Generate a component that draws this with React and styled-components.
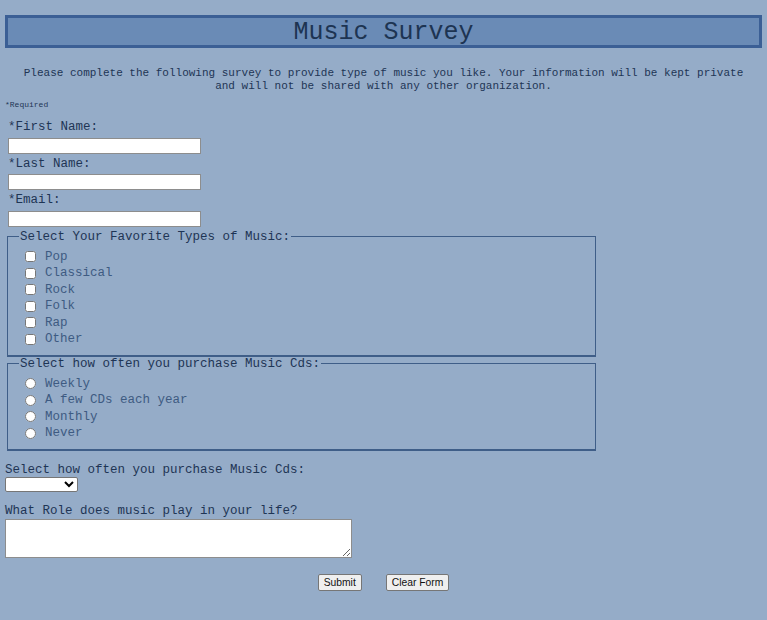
import React from "react";
import styled, { createGlobalStyle } from "styled-components";

const GlobalStyle = createGlobalStyle`
  html, body {
    margin: 0;
    background: #95acc8;
  }
  body {
    font-family: "Liberation Mono", "Courier New", monospace;
    color: #1e3555;
  }
`;

const Page = styled.div`
  padding: 15px 5px 30px;
  box-sizing: border-box;
  min-height: 620px;
`;

const Header = styled.h1`
  margin: 0;
  height: 33px;
  box-sizing: border-box;
  border: 3px solid #3b5f95;
  background: #6a8bb6;
  text-align: center;
  font-size: 25px;
  font-weight: normal;
  line-height: 30px;
  color: #1d3452;
`;

const Intro = styled.p`
  margin: 19px 0 0;
  font-size: 11px;
  line-height: 13px;
  text-align: center;
`;

const Required = styled.div`
  margin-top: 7px;
  font-size: 8px;
  line-height: 9px;
`;

const Contact = styled.div`
  padding: 8px 0 0 3px;
`;

const Label = styled.label`
  display: block;
  font-size: 12.5px;
  line-height: 15px;
  padding-top: 3px;
  margin-bottom: 2.5px;
`;

const TextInput = styled.input`
  display: block;
  width: 193px;
  height: 16px;
  box-sizing: border-box;
  margin: 0;
  border: 1px solid #8d8d8d;
  background: #fff;
`;

const Group = styled.fieldset`
  margin: ${(p) => p.$top || 0}px 0 0 2px;
  width: 589px;
  box-sizing: border-box;
  border: 1px solid #3f5e88;
  border-bottom-width: 2px;
  padding: 5px 10px 7px 17px;
`;

const Legend = styled.legend`
  font-size: 12.5px;
  line-height: 14px;
  padding: 0 1px;
  margin-left: -6px;
  color: #1e3555;
`;

const Option = styled.label`
  display: flex;
  align-items: center;
  height: 16.5px;
  font-size: 12.5px;
  color: #3e5b82;

  input {
    width: 11px;
    height: 11px;
    margin: 0 9px 0 0;
    flex: none;
  }
`;

const Question = styled.div`
  font-size: 12.5px;
  line-height: 15px;
  margin-top: ${(p) => p.$top}px;
`;

const Select = styled.select`
  display: block;
  width: 73px;
  height: 15px;
  box-sizing: border-box;
  margin: -1px 0 0;
  padding: 0;
  border: 1px solid #767676;
  border-radius: 2px;
  background: #fff;
  font-size: 9px;
`;

const TextArea = styled.textarea`
  display: block;
  width: 347px;
  height: 39px;
  box-sizing: border-box;
  margin: 0;
  border: 1px solid #8d8d8d;
  resize: both;
`;

const Actions = styled.div`
  display: flex;
  justify-content: center;
  gap: 24px;
  margin-top: 16px;
`;

const Button = styled.button`
  height: 17px;
  padding: 0 5px;
  box-sizing: border-box;
  font-family: "Liberation Sans", Arial, sans-serif;
  font-size: 10.3px;
  line-height: 15px;
  color: #111;
  background: #efefef;
  border: 1px solid #767676;
  border-radius: 2px;
`;

const musicTypes = ["Pop", "Classical", "Rock", "Folk", "Rap", "Other"];
const frequencies = ["Weekly", "A few CDs each year", "Monthly", "Never"];

export default function App() {
  return (
    <>
      <GlobalStyle />
      <Page>
        <Header>Music Survey</Header>
        <Intro>
          Please complete the following survey to provide type of music you like. Your information will be kept private
          <br />
          and will not be shared with any other organization.
        </Intro>
        <Required>*Required</Required>

        <form onSubmit={(e) => e.preventDefault()}>
          <Contact>
            <Label>*First Name:</Label>
            <TextInput type="text" />
            <Label>*Last Name:</Label>
            <TextInput type="text" />
            <Label>*Email:</Label>
            <TextInput type="email" />
          </Contact>

          <Group $top={3}>
            <Legend>Select Your Favorite Types of Music:</Legend>
            {musicTypes.map((t) => (
              <Option key={t}>
                <input type="checkbox" />
                {t}
              </Option>
            ))}
          </Group>

          <Group>
            <Legend>Select how often you purchase Music Cds:</Legend>
            {frequencies.map((f) => (
              <Option key={f}>
                <input type="radio" name="freq" />
                {f}
              </Option>
            ))}
          </Group>

          <Question $top={12}>Select how often you purchase Music Cds:</Question>
          <Select>
            <option></option>
          </Select>

          <Question $top={12}>What Role does music play in your life?</Question>
          <TextArea />

          <Actions>
            <Button type="submit">Submit</Button>
            <Button type="reset">Clear Form</Button>
          </Actions>
        </form>
      </Page>
    </>
  );
}
